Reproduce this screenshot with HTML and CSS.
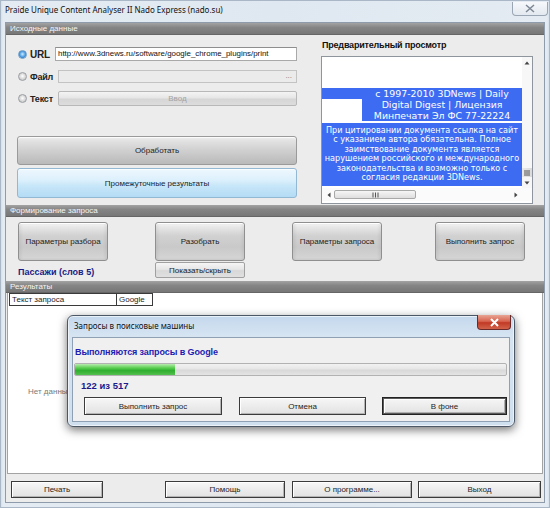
FILE: index.html
```html
<!DOCTYPE html>
<html lang="ru">
<head>
<meta charset="utf-8">
<title>Praide Unique Content Analyser II</title>
<link rel="stylesheet" href="styles.css">
</head>
<body>
<div class="win">
  <div class="titlebar">
    <span class="title">Praide Unique Content Analyser II Nado Express (nado.su)</span>
    <div class="wclose"><svg width="10" height="9" viewBox="0 0 10 9"><path d="M1 1 L9 8 M9 1 L1 8" stroke="#7d8794" stroke-width="1.5" fill="none"/></svg></div>
  </div>
  <div class="client">
    <div class="hdr">Исходные данные</div>
    <div class="src">
      <div class="src-left">
        <div class="row r-url">
          <div class="opt"><span class="radio on"></span><span class="lbl lbl-url">URL</span></div>
          <div class="input">http://www.3dnews.ru/software/google_chrome_plugins/print</div>
        </div>
        <div class="row r-file">
          <div class="opt opt-w"><span class="radio"></span><span class="lbl">Файл</span></div>
          <div class="input dis"><span class="dots">...</span></div>
        </div>
        <div class="row r-text">
          <div class="opt opt-w"><span class="radio"></span><span class="lbl">Текст</span></div>
          <div class="btn-dis">Ввод</div>
        </div>
        <div class="big-btn gray b-proc">Обработать</div>
        <div class="big-btn blue b-mid">Промежуточные результаты</div>
      </div>
      <div class="src-right">
        <div class="pv-label">Предварительный просмотр</div>
        <div class="pv-box">
          <div class="pv-main">
            <div class="pv-content">
              <div class="pv-white"></div>
              <div class="pv-band1">
                <div class="pv-left"><div class="pv-lb"></div><div class="pv-lw"></div></div>
                <div class="pv-t1">с 1997-2010 3DNews | Daily<br>Digital Digest | Лицензия<br>Минпечати Эл ФС 77-22224</div>
              </div>
              <div class="pv-sep"></div>
              <div class="pv-band2">При цитировании документа ссылка на сайт<br>с указанием автора обязательна. Полное<br>заимствование документа является<br>нарушением российского и международного<br>законодательства и возможно только с<br>согласия редакции 3DNews.</div>
            </div>
            <div class="vscroll">
              <svg class="arr" width="10" height="10" viewBox="0 0 10 10"><path d="M2.5 6.5 L5 3.5 L7.5 6.5 Z" fill="#444"/></svg>
              <div class="vthumb"><svg width="8" height="6" viewBox="0 0 8 6"><path d="M1 1 H7 M1 3 H7 M1 5 H7" stroke="#555" stroke-width="1"/></svg></div>
              <svg class="arr" width="10" height="10" viewBox="0 0 10 10"><path d="M2.5 3.5 L5 6.5 L7.5 3.5 Z" fill="#444"/></svg>
            </div>
          </div>
          <div class="hscroll">
            <svg width="10" height="10" viewBox="0 0 10 10"><path d="M6.5 2.5 L3.5 5 L6.5 7.5 Z" fill="#444"/></svg>
            <div class="hthumb"><svg width="7" height="6" viewBox="0 0 7 6"><path d="M1 0.5 V5.5 M3.5 0.5 V5.5 M6 0.5 V5.5" stroke="#555" stroke-width="1"/></svg></div>
            <svg class="rarr" width="10" height="10" viewBox="0 0 10 10"><path d="M3.5 2.5 L6.5 5 L3.5 7.5 Z" fill="#444"/></svg>
          </div>
        </div>
      </div>
    </div>
    <div class="hdr">Формирование запроса</div>
    <div class="form">
      <div class="sq-btn">Параметры разбора</div>
      <div class="sq-btn">Разобрать</div>
      <div class="sq-btn">Параметры запроса</div>
      <div class="sq-btn">Выполнить запрос</div>
      <div class="passages">Пассажи (слов 5)</div>
      <div class="sm-btn">Показать/скрыть</div>
    </div>
    <div class="hdr">Результаты</div>
    <div class="results">
      <div class="thead"><div class="th th1">Текст запроса</div><div class="th th2">Google</div></div>
      <div class="nodata">Нет данных</div>
    </div>
    <div class="bottom">
      <div class="cbtn b-print">Печать</div>
      <div class="cbtn b-help">Помощь</div>
      <div class="cbtn b-about">О программе...</div>
      <div class="cbtn b-exit">Выход</div>
    </div>
  </div>

  <div class="dialog">
    <div class="dtitle">Запросы в поисковые машины</div>
    <div class="dclose"><svg width="11" height="9" viewBox="0 0 11 9"><path d="M2 1 L9 8 M9 1 L2 8" stroke="#fff" stroke-width="2" fill="none"/></svg></div>
    <div class="dpanel">
      <div class="dstatus">Выполняются запросы в Google</div>
      <div class="progress"><div class="fill" style="width:100px"></div></div>
      <div class="dcount">122 из 517</div>
      <div class="dbtns">
        <div class="cbtn d1">Выполнить запрос</div>
        <div class="cbtn d2">Отмена</div>
        <div class="cbtn d3 def">В фоне</div>
      </div>
    </div>
  </div>
</div>
</body>
</html>
```

FILE: styles.css
```css
html, body {
  margin: 0;
  padding: 0;
}
body {
  width: 550px;
  height: 508px;
  overflow: hidden;
  font-family: "Liberation Sans", Arial, sans-serif;
  font-size: 8px;
  color: #1e1e1e;
  background: #dbe4ee;
}
.win {
  position: relative;
  width: 550px;
  height: 508px;
  box-sizing: border-box;
  padding: 0 5px 5px;
  background: linear-gradient(90deg, #cfdbe7 0, #e4ebf2 3px, #dfe8f1 50%, #e4ebf2 calc(100% - 3px), #cfdbe7 100%);
  box-shadow: inset 0 0 0 1px #a9b7c6;
}
.titlebar {
  height: 22px;
  display: flex;
  align-items: flex-start;
}
.title {
  font-family: "Noto Sans", "Open Sans", sans-serif;
  font-size: 8px;
  line-height: 20px;
  color: #111;
}
.wclose {
  margin-left: auto;
  margin-right: -3px;
  margin-top: 2px;
  width: 36px;
  height: 14px;
  box-sizing: border-box;
  border: 1px solid #9aa6b3;
  border-top: none;
  border-radius: 0 0 4px 4px;
  background: linear-gradient(#f6f8fb, #e3e9f0);
  display: flex;
  align-items: center;
  justify-content: center;
}

.client {
  height: 481px;
  box-sizing: border-box;
  border: 1px solid #8e9bab;
  background: #ececec;
  display: flex;
  flex-direction: column;
}
.hdr {
  height: 12px;
  line-height: 12px;
  padding-left: 4px;
  color: #f4f4f4;
  font-size: 8px;
  background: linear-gradient(#a3a3a3, #858585 40%, #777);
  border-bottom: 1px solid #666;
  box-sizing: border-box;
  flex: none;
}

/* ---------- source section ---------- */
.src {
  height: 170px;
  display: flex;
  flex: none;
}
.src-left {
  width: 280px;
  margin-left: 11px;
  padding-top: 12px;
  display: flex;
  flex-direction: column;
}
.row {
  display: flex;
  align-items: center;
}
.r-url { height: 14px; }
.r-file { height: 13px; margin-top: 9px; }
.r-text { height: 15px; margin-top: 8px; }
.opt {
  width: 38px;
  flex: none;
  display: flex;
  align-items: center;
}
.opt-w { width: 41px; }
.radio {
  width: 9px;
  height: 9px;
  box-sizing: border-box;
  border-radius: 50%;
  border: 1px solid #9a9ea3;
  background: radial-gradient(circle at 50% 45%, #ffffff 0, #e2e2e2 2px, #c9c9c9 4px);
  margin-left: 1px;
  flex: none;
}
.radio.on {
  border-color: #6a9cc8;
  background: radial-gradient(circle at 50% 45%, #cfeaff 0, #6bb3ec 2px, #3b86cf 3.5px, #dce8f3 4.2px);
}
.lbl {
  margin-left: 3px;
  font-weight: bold;
  font-size: 9px;
  color: #222;
  letter-spacing: -0.2px;
}
.lbl-url { font-size: 10px; margin-left: 3px; }
.input {
  flex: 1;
  height: 100%;
  box-sizing: border-box;
  border: 1px solid #a9a9a9;
  border-top-color: #8e8e8e;
  background: #fff;
  font-size: 7.9px;
  line-height: 12px;
  padding-left: 2px;
  color: #111;
  white-space: nowrap;
  overflow: hidden;
}
.input.dis {
  background: #ebebeb;
  border-color: #c3c3c3;
  display: flex;
  justify-content: flex-end;
}
.dots {
  color: #777;
  padding-right: 4px;
  line-height: 9px;
}
.btn-dis {
  flex: 1;
  height: 100%;
  box-sizing: border-box;
  border: 1px solid #b8b8b8;
  border-radius: 2px;
  background: linear-gradient(#f4f4f4, #e6e6e6 45%, #d6d6d6 55%, #dcdcdc);
  color: #a4a4a4;
  display: flex;
  align-items: center;
  justify-content: center;
}
.big-btn {
  box-sizing: border-box;
  border: 1px solid #9a9a9a;
  border-radius: 3px;
  display: flex;
  align-items: center;
  justify-content: center;
  color: #1e1e1e;
}
.gray {
  background: linear-gradient(#f0f0f0 0, #e3e3e3 12%, #d2d2d2 45%, #c2c2c2 80%, #b9b9b9 100%);
  box-shadow: inset 0 1px 0 #fbfbfb;
}
.blue {
  border-color: #92b8d3;
  background: linear-gradient(#eef7fd 0, #dcf0fc 40%, #c7e6f9 60%, #b3dcf4 100%);
  box-shadow: inset 0 1px 0 #fafdff;
}
.b-proc { height: 29px; margin-top: 30px; }
.b-mid { height: 30px; margin-top: 3px; }

.src-right {
  width: 212px;
  margin-left: 24px;
  display: flex;
  flex-direction: column;
}
.pv-label {
  margin-top: 4px;
  height: 12px;
  line-height: 12px;
  padding-left: 1px;
  font-weight: bold;
  font-size: 9px;
  letter-spacing: -0.2px;
  color: #111;
}
.pv-box {
  margin-top: 5px;
  height: 148px;
  box-sizing: border-box;
  border: 1px solid #8f959c;
  background: #fff;
  display: flex;
  flex-direction: column;
}
.pv-main {
  height: 131px;
  display: flex;
}
.pv-content {
  width: 200px;
  display: flex;
  flex-direction: column;
}
.pv-white { height: 31px; }
.pv-band1 {
  height: 33px;
  display: flex;
  background: #3d6cf3;
}
.pv-left {
  width: 40px;
  display: flex;
  flex-direction: column;
}
.pv-lb { height: 11px; }
.pv-lw { flex: 1; background: #fff; }
.pv-t1 {
  flex: 1;
  text-align: center;
  font-family: "DejaVu Sans", Verdana, sans-serif;
  font-size: 9.4px;
  line-height: 11px;
  color: #fff;
}
.pv-sep { height: 2px; background: #fff; }
.pv-band2 {
  height: 63px;
  background: #3d6cf3;
  text-align: center;
  font-family: "DejaVu Sans", Verdana, sans-serif;
  font-size: 8.1px;
  line-height: 9.4px;
  color: #fff;
  padding-top: 3px;
  box-sizing: border-box;
  white-space: nowrap;
}
.vscroll {
  width: 10px;
  background: #f7f7f7;
  display: flex;
  flex-direction: column;
  align-items: center;
}
.vscroll .arr { flex: none; margin-top: 1px; }
.vthumb {
  margin-top: auto;
  width: 10px;
  height: 9px;
  display: flex;
  align-items: center;
  justify-content: center;
  background: linear-gradient(90deg, #eaeaea, #dadada);
}
.hscroll {
  height: 13px;
  display: flex;
  align-items: center;
  padding-left: 2px;
  background: #fbfbfb;
}
.hthumb {
  width: 82px;
  height: 9px;
  box-sizing: border-box;
  border: 1px solid #a8a8a8;
  border-radius: 2px;
  background: linear-gradient(#f6f6f6, #dedede);
  display: flex;
  align-items: center;
  justify-content: center;
}
.rarr { margin-left: auto; margin-right: 11px; }

/* ---------- query formation ---------- */
.form {
  height: 64px;
  flex: none;
  box-sizing: border-box;
  padding: 5px 0 0 12px;
  display: grid;
  grid-template-columns: 137px 137px 143px 90px;
  grid-template-rows: 39px 16px;
  row-gap: 1px;
}
.sq-btn {
  width: 90px;
  box-sizing: border-box;
  border: 1px solid #8f8f8f;
  border-radius: 3px;
  background: linear-gradient(#f7f7f7 0, #e8e8e8 10%, #d1d1d1 35%, #c9c9c9 65%, #d6d6d6 100%);
  box-shadow: inset 0 1px 0 #ffffff, inset 2px 0 3px rgba(0,0,0,0.06), inset -2px 0 3px rgba(0,0,0,0.06);
  display: flex;
  align-items: center;
  justify-content: center;
  color: #222;
}
.passages {
  font-weight: bold;
  font-size: 9px;
  color: #1a1a86;
  line-height: 16px;
  padding-top: 2px;
  white-space: nowrap;
}
.sm-btn {
  width: 90px;
  box-sizing: border-box;
  border: 1px solid #a0a0a0;
  border-radius: 2px;
  background: linear-gradient(#f5f5f5, #e6e6e6 45%, #d8d8d8 55%, #e0e0e0);
  display: flex;
  align-items: center;
  justify-content: center;
  color: #222;
}

/* ---------- results ---------- */
.results {
  height: 181px;
  flex: none;
  box-sizing: border-box;
  margin: 0 1px;
  border: 1px solid #a3a3a3;
  border-top: none;
  background: #fff;
  padding-left: 1px;
}
.thead {
  display: flex;
  height: 13px;
}
.th {
  box-sizing: border-box;
  border: 1px solid #3a3a3a;
  line-height: 11px;
  padding-left: 2px;
  background: #fff;
}
.th1 { width: 108px; }
.th2 { width: 36px; border-left: none; }
.nodata {
  margin-top: 80px;
  padding-left: 19px;
  line-height: 12px;
  color: #7a7a7a;
}

/* ---------- bottom bar ---------- */
.bottom {
  flex: 1;
  display: flex;
  align-items: flex-start;
  padding: 7px 0 0 5px;
}
.cbtn {
  height: 17px;
  box-sizing: border-box;
  border: 1px solid #3b3b3b;
  background: linear-gradient(#f7f7f7, #ececec 50%, #e2e2e2);
  box-shadow: inset 1px 1px 0 #ffffff, inset -1px -1px 0 #b4b4b4;
  display: flex;
  align-items: center;
  justify-content: center;
  color: #1e1e1e;
}
.b-print { width: 92px; }
.b-help { width: 120px; margin-left: 62px; }
.b-about { width: 120px; margin-left: 7px; }
.b-exit { width: 123px; margin-left: 6px; }

/* ---------- dialog overlay ---------- */
.dialog {
  position: absolute;
  left: 67px;
  top: 315px;
  width: 448px;
  height: 112px;
  box-sizing: border-box;
  border: 1px solid #4c5866;
  border-radius: 6px;
  background: linear-gradient(#c4d8ec 0, #d6e4f2 20px, #cfdfee 100%);
  box-shadow: 0 3px 10px rgba(0,0,0,0.55), inset 0 0 0 1px rgba(255,255,255,0.6);
  padding: 0 4px;
}
.dtitle {
  height: 21px;
  line-height: 20px;
  padding-left: 2px;
  font-family: "Noto Sans", "Open Sans", sans-serif;
  font-size: 8px;
  color: #111;
}
.dclose {
  position: absolute;
  top: -1px;
  right: 3px;
  width: 34px;
  height: 15px;
  box-sizing: border-box;
  border: 1px solid #6b2a2a;
  border-top: none;
  border-radius: 0 0 4px 4px;
  background: linear-gradient(#e8a493 0, #d7644f 45%, #c23a25 55%, #d2624a 100%);
  display: flex;
  align-items: center;
  justify-content: center;
}
.dpanel {
  height: 85px;
  box-sizing: border-box;
  border: 1px solid #8fa0b4;
  background: #f0f0f0;
  display: flex;
  flex-direction: column;
}
.dstatus {
  margin-top: 8px;
  padding-left: 2px;
  line-height: 12px;
  font-weight: bold;
  font-size: 9px;
  color: #1c1cb4;
  letter-spacing: -0.1px;
}
.progress {
  margin: 5px 0 0 1px;
  width: 433px;
  height: 13px;
  box-sizing: border-box;
  border: 1px solid #b2b2b2;
  border-radius: 2px;
  background: linear-gradient(#f2f2f2, #e6e6e6 45%, #d8d8d8 55%, #e4e4e4);
  overflow: hidden;
}
.fill {
  height: 100%;
  background: linear-gradient(#b8ecb0 0, #5ccf52 35%, #2fae2f 60%, #54c04f 100%);
}
.dcount {
  margin-top: 4px;
  padding-left: 8px;
  line-height: 12px;
  font-weight: bold;
  font-size: 9.5px;
  color: #1a1a8c;
}
.dbtns {
  display: flex;
  margin-top: 5px;
  padding-left: 11px;
}
.cbtn.d1 { width: 138px; height: 18px; }
.cbtn.d2 { width: 127px; height: 18px; margin-left: 17px; }
.cbtn.d3 { width: 125px; height: 18px; margin-left: 16px; }
.cbtn.def {
  border: 1px solid #222;
  box-shadow: inset 0 0 0 1px #5a5a5a, inset 2px 2px 0 #ffffff, inset -2px -2px 0 #b0b0b0;
}
```
